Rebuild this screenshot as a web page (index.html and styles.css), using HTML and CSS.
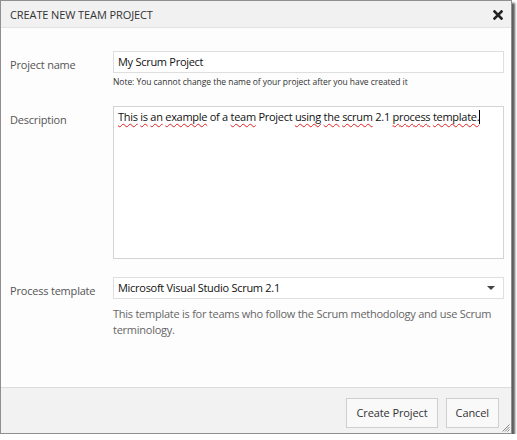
FILE: index.html
```html
<!DOCTYPE html>
<html>
<head>
<meta charset="utf-8">
<link rel="stylesheet" href="styles.css">
</head>
<body>
<div class="dialog">
  <div class="titlebar">
    <span class="title">CREATE NEW TEAM PROJECT</span>
    <svg class="close" width="10" height="10" viewBox="0 0 10 10"><path d="M1.5 1.5 L8.5 8.5 M8.5 1.5 L1.5 8.5" stroke="#222" stroke-width="2.6" stroke-linecap="square"/></svg>
  </div>
  <div class="content">
    <div class="label">Project name</div>
    <div class="field">
      <div class="input">My Scrum Project</div>
      <div class="note">Note: You cannot change the name of your project after you have created it</div>
    </div>
    <div class="label">Description</div>
    <div class="field field-tight">
      <div class="textarea"><span class="sp">This</span> <span class="sp">is</span> <span class="sp">an</span> <span class="sp">example</span> of a <span class="sp">team</span> Project <span class="sp">using</span> <span class="sp">the</span> <span class="sp">scrum</span> 2.1 <span class="sp">process</span> <span class="sp">template.</span><span class="caret"></span></div>
    </div>
    <div class="label">Process template</div>
    <div class="field">
      <div class="select"><span>Microsoft Visual Studio Scrum 2.1</span><span class="arrow"></span></div>
      <div class="help">This template is for teams who follow the Scrum methodology and use Scrum terminology.</div>
    </div>
  </div>
  <div class="footer">
    <button class="btn">Create Project</button>
    <button class="btn">Cancel</button>
    <svg class="grip" width="8" height="8" viewBox="0 0 8 8"><path d="M7.5 0.5 L0.5 7.5 M7.5 3 L3 7.5 M7.5 5.5 L5.5 7.5" stroke="#888" stroke-width="1"/></svg>
  </div>
</div>
</body>
</html>
```

FILE: styles.css
```css
html, body {
  margin: 0;
  padding: 0;
  background: #ffffff;
}
body {
  font-family: "Open Sans", "Noto Sans", sans-serif;
  color: #222;
}
.dialog {
  width: 510px;
  height: 432px;
  border: 1px solid #8f8f8f;
  background: #fdfdfd;
  box-shadow: 3px 3px 2px rgba(40, 40, 40, 0.75);
  display: flex;
  flex-direction: column;
  box-sizing: content-box;
}
.titlebar {
  height: 26px;
  background: #f1f1f1;
  border-bottom: 1px solid #e2e2e2;
  display: flex;
  align-items: center;
  justify-content: space-between;
  padding: 0 8px 0 9px;
}
.title {
  font-size: 11px;
  color: #333;
  letter-spacing: -0.1px;
}
.close {
  display: block;
  margin-top: 1px;
}
.content {
  flex: 1;
  display: grid;
  grid-template-columns: 103px 391px;
  padding: 23px 7px 0 9px;
  align-content: start;
}
.label {
  font-size: 11px;
  color: #555;
  padding-top: 6px;
  letter-spacing: -0.2px;
}
.field {
  margin-bottom: 19px;
}
.field-tight {
  margin-bottom: 18px;
}
.input, .select, .textarea {
  box-sizing: border-box;
  border: 1px solid #dedede;
  background: #fff;
  font-size: 11px;
  color: #111;
  letter-spacing: -0.28px;
}
.input {
  height: 22px;
  line-height: 20px;
  padding: 0 4px;
}
.note {
  font-size: 8.5px;
  color: #333;
  margin-top: 3px;
  letter-spacing: -0.05px;
}
.textarea {
  height: 153px;
  padding: 2px 4px;
  line-height: 16px;
  border-color: #d4d4d4;
}
.sp {
  text-decoration: underline wavy #e02020;
  text-decoration-thickness: 1px;
  text-underline-offset: 2px;
  text-decoration-skip-ink: none;
}
.caret {
  display: inline-block;
  width: 1px;
  height: 14px;
  background: #000;
  vertical-align: -3px;
}
.select {
  height: 22px;
  line-height: 20px;
  padding: 0 8px 0 4px;
  display: flex;
  justify-content: space-between;
  align-items: center;
}
.arrow {
  width: 0;
  height: 0;
  border-left: 4px solid transparent;
  border-right: 4px solid transparent;
  border-top: 4px solid #444;
}
.help {
  font-size: 11px;
  color: #666;
  line-height: 16px;
  margin-top: 7px;
  letter-spacing: -0.25px;
}
.footer {
  height: 45px;
  background: #f2f2f2;
  border-top: 1px solid #dcdcdc;
  display: flex;
  justify-content: flex-end;
  align-items: center;
  gap: 8px;
  padding-right: 12px;
  position: relative;
}
.btn {
  font-family: "Open Sans", "Noto Sans", sans-serif;
  font-size: 11px;
  color: #333;
  background: #f9f9f9;
  border: 1px solid #cfcfcf;
  height: 30px;
  padding: 0 9px;
  margin-top: 4px;
  letter-spacing: -0.1px;
}
.grip {
  position: absolute;
  right: 1px;
  bottom: 1px;
}
```
